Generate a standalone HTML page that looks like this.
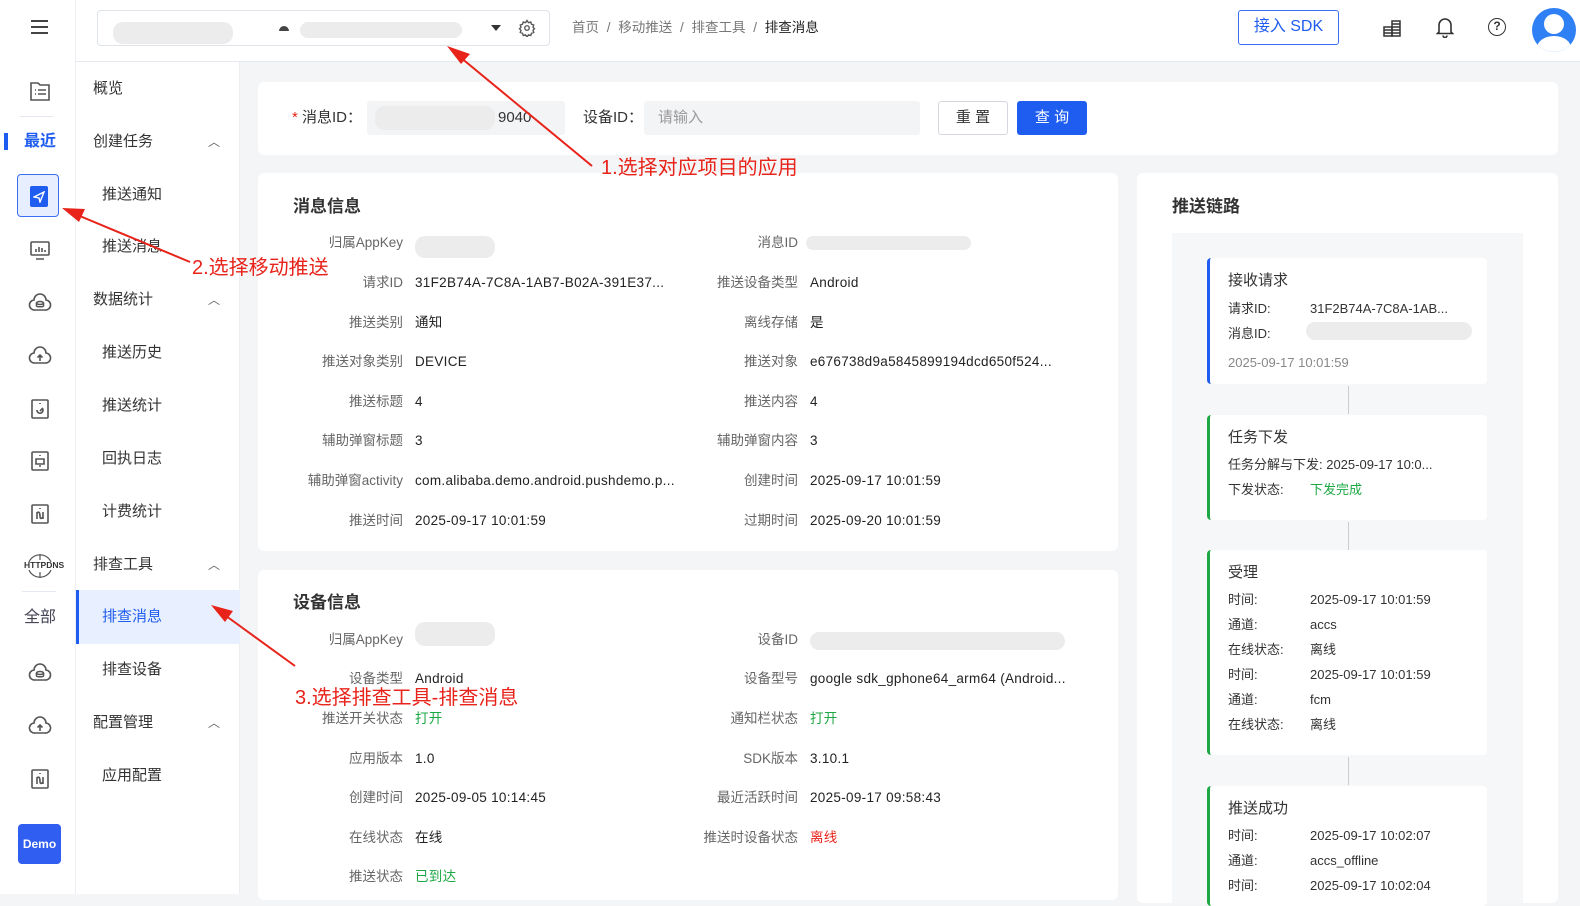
<!DOCTYPE html>
<html><head><meta charset="utf-8"><style>
*{margin:0;padding:0;box-sizing:border-box}
body{width:1580px;height:894px;overflow:hidden;background:#f4f5f7;font-family:"Liberation Sans","Noto Sans CJK SC",sans-serif;color:#333;position:relative}
.a{position:absolute}
.top{left:0;top:0;width:1580px;height:62px;background:#fff;border-bottom:1px solid #e4e8ef}
.rail{left:0;top:0;width:76px;height:894px;background:#fff;border-right:1px solid #eceef2}
.nav{left:76px;top:62px;width:164px;height:832px;background:#fff;border-right:1px solid #eceef2}
.nav div{position:absolute;font-size:15px;color:#333;line-height:20px}
.card{background:#fff;border-radius:6px}
.lbl{position:absolute;font-size:13.5px;color:#666;text-align:right;white-space:nowrap;line-height:18px}
.val{position:absolute;font-size:13.5px;color:#222;white-space:nowrap;letter-spacing:.3px;line-height:18px}
.ic{position:absolute;left:28px}
.blur{position:absolute;background:#ececec;border-radius:10px}
.step{position:absolute;left:1207px;width:280px;background:#fff;border-radius:4px;border-left:3px solid #1ea845}
.step .t{position:absolute;left:18px;top:12px;font-size:15px;color:#333;line-height:22px}
.step .r{position:absolute;left:18px;font-size:13px;color:#333;white-space:nowrap;line-height:18px}
.step .r span{position:absolute;left:82px;top:0}
.ann{position:absolute;color:#e8231a;font-size:20px;white-space:nowrap;line-height:24px}
</style></head><body>
<div class="a top"></div>
<div class="a rail"></div>
<!-- rail -->
<div class="a" style="left:31px;top:20px;width:17px;height:2px;background:#444;box-shadow:0 6px 0 #444,0 12px 0 #444"></div>
<svg class="ic" style="top:79px" width="24" height="24" viewBox="0 0 24 24" fill="none" stroke="#555" stroke-width="1.6"><path d="M3 4h7l2 2h9v15H3z"/><path d="M7 11h1M10 11h8M7 15h1M10 15h8"/></svg>
<div class="a" style="left:20px;top:116px;width:34px;height:1px;background:#e4e8ef"></div>
<div class="a" style="left:4px;top:133px;width:4px;height:17px;background:#1f5cf0"></div>
<div class="a" style="left:24px;top:132px;font-size:16px;color:#1f5cf0;font-weight:bold;line-height:20px">最近</div>
<div class="a" style="left:17px;top:174px;width:42px;height:43px;border:1.5px solid #3a6ff2;border-radius:4px;background:#e6eeff"></div>
<div class="a" style="left:30px;top:186px;width:18px;height:21px;background:#1f5cf0;border-radius:2px"></div>
<svg class="a" style="left:33px;top:191px" width="12" height="12" viewBox="0 0 12 12" fill="none" stroke="#fff" stroke-width="1.4"><path d="M1 6l10-5-4 10-1-4z"/></svg>
<svg class="ic" style="top:238px" width="24" height="24" viewBox="0 0 24 24" fill="none" stroke="#555" stroke-width="1.6"><rect x="3" y="4" width="18" height="13" rx="1"/><path d="M8 21h8M8 14v-3M11 14v-5M14 14v-4M17 14v-2"/></svg>
<svg class="ic" style="top:291px" width="24" height="24" viewBox="0 0 24 24" fill="none" stroke="#555" stroke-width="1.6"><path d="M7 19a5 5 0 0 1-1-10 6 6 0 0 1 12 0 5 5 0 0 1-1 10z"/><ellipse cx="12" cy="12" rx="3.5" ry="1.5"/><path d="M8.5 12v3c0 1 7 1 7 0v-3"/></svg>
<svg class="ic" style="top:344px" width="24" height="24" viewBox="0 0 24 24" fill="none" stroke="#555" stroke-width="1.6"><path d="M7 19a5 5 0 0 1-1-10 6 6 0 0 1 12 0 5 5 0 0 1-1 10z"/><path d="M12 17v-6M9.5 13.5L12 11l2.5 2.5"/></svg>
<svg class="ic" style="top:397px" width="24" height="24" viewBox="0 0 24 24" fill="none" stroke="#555" stroke-width="1.6"><rect x="4" y="3" width="16" height="18" rx="1"/><path d="M12 6v1M9 13a3 3 0 1 0 5-2M12 14l3-3"/></svg>
<svg class="ic" style="top:449px" width="24" height="24" viewBox="0 0 24 24" fill="none" stroke="#555" stroke-width="1.6"><rect x="4" y="3" width="16" height="18" rx="1"/><path d="M12 6v1M8 10h8v5H8zM11 17h2"/></svg>
<svg class="ic" style="top:502px" width="24" height="24" viewBox="0 0 24 24" fill="none" stroke="#555" stroke-width="1.6"><rect x="4" y="3" width="16" height="18" rx="1"/><path d="M12 6v1M9 10v7M9 11c2-2 3 0 3 3s1 3 3 1M15 10v7"/></svg>
<svg class="ic" style="top:553px;left:25px" width="30" height="26" viewBox="0 0 30 26" fill="none" stroke="#555" stroke-width="1.2"><path d="M4 9a12 12 0 0 1 22 0M4 17a12 12 0 0 0 22 0M15 1v6M15 19v6"/></svg>
<div class="a" style="left:24px;top:560px;font-size:8.5px;font-weight:bold;color:#333;line-height:10px">HTTPDNS</div>
<div class="a" style="left:22px;top:591px;width:34px;height:1px;background:#e4e8ef"></div>
<div class="a" style="left:24px;top:608px;font-size:16px;color:#445;line-height:20px">全部</div>
<svg class="ic" style="top:661px" width="24" height="24" viewBox="0 0 24 24" fill="none" stroke="#555" stroke-width="1.6"><path d="M7 19a5 5 0 0 1-1-10 6 6 0 0 1 12 0 5 5 0 0 1-1 10z"/><ellipse cx="12" cy="12" rx="3.5" ry="1.5"/><path d="M8.5 12v3c0 1 7 1 7 0v-3"/></svg>
<svg class="ic" style="top:714px" width="24" height="24" viewBox="0 0 24 24" fill="none" stroke="#555" stroke-width="1.6"><path d="M7 19a5 5 0 0 1-1-10 6 6 0 0 1 12 0 5 5 0 0 1-1 10z"/><path d="M12 17v-6M9.5 13.5L12 11l2.5 2.5"/></svg>
<svg class="ic" style="top:767px" width="24" height="24" viewBox="0 0 24 24" fill="none" stroke="#555" stroke-width="1.6"><rect x="4" y="3" width="16" height="18" rx="1"/><path d="M12 6v1M9 10v7M9 11c2-2 3 0 3 3s1 3 3 1M15 10v7"/></svg>
<div class="a" style="left:18px;top:824px;width:43px;height:40px;background:#2f5ef0;border-radius:4px;color:#fff;font-size:12px;font-weight:bold;text-align:center;line-height:40px">Demo</div>
<!-- top bar -->
<div class="a" style="left:97px;top:10px;width:453px;height:36px;border:1px solid #dfe3ea;border-radius:4px"></div>
<div class="blur" style="left:113px;top:22px;width:120px;height:22px"></div>
<div class="blur" style="left:300px;top:22px;width:162px;height:16px"></div>
<svg class="a" style="left:278px;top:22px" width="12" height="10" viewBox="0 0 12 10" fill="#444"><path d="M1 9a5 5 0 0 1 10 0z"/></svg>
<svg class="a" style="left:491px;top:25px" width="10" height="6" viewBox="0 0 10 6" fill="#333"><path d="M0 0h10L5 6z"/></svg>
<svg class="a" style="left:518px;top:19px" width="18" height="18" viewBox="0 0 24 24" fill="none" stroke="#555" stroke-width="1.8"><circle cx="12" cy="12" r="3"/><path d="M12 2l2 3 3-1 1 3 3 1-1 3 2 2-2 2 1 3-3 1-1 3-3-1-2 3-2-3-3 1-1-3-3-1 1-3-2-2 2-2-1-3 3-1 1-3 3 1z"/></svg>
<div class="a" style="left:572px;top:19px;font-size:13.5px;color:#777;word-spacing:4px;line-height:18px">首页 / 移动推送 / 排查工具 / <span style="color:#222">排查消息</span></div>
<div class="a" style="left:1238px;top:10px;width:101px;height:35px;border:1.5px solid #3a6ff2;border-radius:3px;color:#1f5cf0;font-size:16px;text-align:center;line-height:32px">接入 SDK</div>
<svg class="a" style="left:1382px;top:18px" width="20" height="20" viewBox="0 0 20 20" fill="none" stroke="#333" stroke-width="1.5"><rect x="2" y="9" width="8" height="9"/><path d="M2 12h8M2 15h8"/><rect x="10" y="3" width="8" height="15"/><path d="M10 6h8M10 9h8M10 12h8M10 15h8"/></svg>
<svg class="a" style="left:1435px;top:16px" width="20" height="22" viewBox="0 0 20 22" fill="none" stroke="#333" stroke-width="1.6"><path d="M4 16V9a6 6 0 0 1 12 0v7l1.5 1.5h-15zM8 19.5a2 2 0 0 0 4 0"/></svg>
<div class="a" style="left:1488px;top:18px;width:18px;height:18px;border:1.6px solid #333;border-radius:50%;font-size:12px;text-align:center;line-height:15px;font-weight:bold">?</div>
<div class="a" style="left:1532px;top:8px;width:44px;height:44px;border-radius:50%;background:#2f7ff5;overflow:hidden"><div class="a" style="left:12px;top:6px;width:20px;height:20px;border-radius:50%;background:#fff"></div><div class="a" style="left:5px;top:28px;width:34px;height:24px;border-radius:50%;background:#fff"></div></div>
<!-- nav -->
<div class="a nav">
<div style="left:17px;top:17px">概览</div>
<div style="left:17px;top:70px">创建任务</div><div style="left:132px;top:70px;color:#666;font-size:12px">︿</div>
<div style="left:26px;top:123px">推送通知</div>
<div style="left:26px;top:175px">推送消息</div>
<div style="left:17px;top:228px">数据统计</div><div style="left:132px;top:228px;color:#666;font-size:12px">︿</div>
<div style="left:26px;top:281px">推送历史</div>
<div style="left:26px;top:334px">推送统计</div>
<div style="left:26px;top:387px">回执日志</div>
<div style="left:26px;top:440px">计费统计</div>
<div style="left:17px;top:493px">排查工具</div><div style="left:132px;top:493px;color:#666;font-size:12px">︿</div>
<div style="left:0;top:528px;width:164px;height:54px;background:#e8efff;border-left:3px solid #1f5cf0"></div>
<div style="left:26px;top:545px;color:#1f5cf0">排查消息</div>
<div style="left:26px;top:598px">排查设备</div>
<div style="left:17px;top:651px">配置管理</div><div style="left:132px;top:651px;color:#666;font-size:12px">︿</div>
<div style="left:26px;top:704px">应用配置</div>
</div>
<!-- query card -->
<div class="a card" style="left:258px;top:82px;width:1300px;height:73px"></div>
<div class="a" style="left:292px;top:108px;font-size:15px;color:#333;line-height:20px"><span style="color:#e8231a">*</span> 消息ID：</div>
<div class="a" style="left:367px;top:101px;width:198px;height:34px;background:#f3f4f6;border-radius:3px"></div>
<div class="blur" style="left:375px;top:106px;width:120px;height:24px"></div>
<div class="a" style="left:498px;top:108px;font-size:15px;line-height:20px">9040</div>
<div class="a" style="left:583px;top:108px;font-size:15px;line-height:20px">设备ID：</div>
<div class="a" style="left:644px;top:101px;width:276px;height:34px;background:#f3f4f6;border-radius:3px;font-size:15px;color:#999;padding:0 14px;line-height:34px">请输入</div>
<div class="a" style="left:938px;top:101px;width:70px;height:34px;border:1px solid #d5d8de;border-radius:3px;font-size:15px;text-align:center;line-height:32px">重 置</div>
<div class="a" style="left:1017px;top:101px;width:70px;height:34px;background:#1f5cf0;border-radius:3px;font-size:15px;color:#fff;text-align:center;line-height:34px">查 询</div>
<!-- msg card -->
<div class="a card" style="left:258px;top:173px;width:860px;height:378px"></div>
<div class="a" style="left:293px;top:196px;font-size:17px;font-weight:bold;line-height:22px">消息信息</div>
<div class="lbl" style="right:1177px;top:234px">归属AppKey</div><div class="blur" style="left:415px;top:236px;width:80px;height:22px"></div>
<div class="lbl" style="right:782px;top:234px">消息ID</div><div class="blur" style="left:806px;top:236px;width:165px;height:14px"></div>
<div class="lbl" style="right:1177px;top:274px">请求ID</div><div class="val" style="left:415px;top:274px">31F2B74A-7C8A-1AB7-B02A-391E37...</div>
<div class="lbl" style="right:782px;top:274px">推送设备类型</div><div class="val" style="left:810px;top:274px">Android</div>
<div class="lbl" style="right:1177px;top:314px">推送类别</div><div class="val" style="left:415px;top:314px">通知</div>
<div class="lbl" style="right:782px;top:314px">离线存储</div><div class="val" style="left:810px;top:314px">是</div>
<div class="lbl" style="right:1177px;top:353px">推送对象类别</div><div class="val" style="left:415px;top:353px">DEVICE</div>
<div class="lbl" style="right:782px;top:353px">推送对象</div><div class="val" style="left:810px;top:353px">e676738d9a5845899194dcd650f524...</div>
<div class="lbl" style="right:1177px;top:393px">推送标题</div><div class="val" style="left:415px;top:393px">4</div>
<div class="lbl" style="right:782px;top:393px">推送内容</div><div class="val" style="left:810px;top:393px">4</div>
<div class="lbl" style="right:1177px;top:432px">辅助弹窗标题</div><div class="val" style="left:415px;top:432px">3</div>
<div class="lbl" style="right:782px;top:432px">辅助弹窗内容</div><div class="val" style="left:810px;top:432px">3</div>
<div class="lbl" style="right:1177px;top:472px">辅助弹窗activity</div><div class="val" style="left:415px;top:472px">com.alibaba.demo.android.pushdemo.p...</div>
<div class="lbl" style="right:782px;top:472px">创建时间</div><div class="val" style="left:810px;top:472px">2025-09-17 10:01:59</div>
<div class="lbl" style="right:1177px;top:512px">推送时间</div><div class="val" style="left:415px;top:512px">2025-09-17 10:01:59</div>
<div class="lbl" style="right:782px;top:512px">过期时间</div><div class="val" style="left:810px;top:512px">2025-09-20 10:01:59</div>
<!-- device card -->
<div class="a card" style="left:258px;top:570px;width:860px;height:330px"></div>
<div class="a" style="left:293px;top:592px;font-size:17px;font-weight:bold;line-height:22px">设备信息</div>
<div class="lbl" style="right:1177px;top:631px">归属AppKey</div><div class="blur" style="left:415px;top:622px;width:80px;height:24px"></div>
<div class="lbl" style="right:782px;top:631px">设备ID</div><div class="blur" style="left:810px;top:632px;width:255px;height:18px"></div>
<div class="lbl" style="right:1177px;top:670px">设备类型</div><div class="val" style="left:415px;top:670px">Android</div>
<div class="lbl" style="right:782px;top:670px">设备型号</div><div class="val" style="left:810px;top:670px">google sdk_gphone64_arm64 (Android...</div>
<div class="lbl" style="right:1177px;top:710px">推送开关状态</div><div class="val" style="left:415px;top:710px;color:#1ea845">打开</div>
<div class="lbl" style="right:782px;top:710px">通知栏状态</div><div class="val" style="left:810px;top:710px;color:#1ea845">打开</div>
<div class="lbl" style="right:1177px;top:750px">应用版本</div><div class="val" style="left:415px;top:750px">1.0</div>
<div class="lbl" style="right:782px;top:750px">SDK版本</div><div class="val" style="left:810px;top:750px">3.10.1</div>
<div class="lbl" style="right:1177px;top:789px">创建时间</div><div class="val" style="left:415px;top:789px">2025-09-05 10:14:45</div>
<div class="lbl" style="right:782px;top:789px">最近活跃时间</div><div class="val" style="left:810px;top:789px">2025-09-17 09:58:43</div>
<div class="lbl" style="right:1177px;top:829px">在线状态</div><div class="val" style="left:415px;top:829px">在线</div>
<div class="lbl" style="right:782px;top:829px">推送时设备状态</div><div class="val" style="left:810px;top:829px;color:#e8231a">离线</div>
<div class="lbl" style="right:1177px;top:868px">推送状态</div><div class="val" style="left:415px;top:868px;color:#1ea845">已到达</div>
<!-- chain -->
<div class="a card" style="left:1137px;top:173px;width:421px;height:730px"></div>
<div class="a" style="left:1172px;top:196px;font-size:17px;font-weight:bold;line-height:22px">推送链路</div>
<div class="a" style="left:1172px;top:233px;width:351px;height:670px;background:#f6f7f9"></div>
<div class="step" style="top:258px;height:126px;border-left-color:#1f5cf0">
<div class="t">接收请求</div>
<div class="r" style="top:42px">请求ID:<span>31F2B74A-7C8A-1AB...</span></div>
<div class="r" style="top:67px">消息ID:</div><div class="blur" style="left:96px;top:64px;width:166px;height:18px"></div>
<div class="r" style="top:96px;color:#888">2025-09-17 10:01:59</div></div>
<div class="a" style="left:1348px;top:386px;width:1px;height:28px;background:#ccc"></div>
<div class="step" style="top:415px;height:105px">
<div class="t">任务下发</div>
<div class="r" style="top:41px">任务分解与下发:&nbsp;2025-09-17 10:0...</div>
<div class="r" style="top:66px">下发状态:<span style="color:#1ea845">下发完成</span></div></div>
<div class="a" style="left:1348px;top:522px;width:1px;height:28px;background:#ccc"></div>
<div class="step" style="top:550px;height:205px">
<div class="t">受理</div>
<div class="r" style="top:41px">时间:<span>2025-09-17 10:01:59</span></div>
<div class="r" style="top:66px">通道:<span>accs</span></div>
<div class="r" style="top:91px">在线状态:<span>离线</span></div>
<div class="r" style="top:116px">时间:<span>2025-09-17 10:01:59</span></div>
<div class="r" style="top:141px">通道:<span>fcm</span></div>
<div class="r" style="top:166px">在线状态:<span>离线</span></div></div>
<div class="a" style="left:1348px;top:757px;width:1px;height:28px;background:#ccc"></div>
<div class="step" style="top:786px;height:120px">
<div class="t">推送成功</div>
<div class="r" style="top:41px">时间:<span>2025-09-17 10:02:07</span></div>
<div class="r" style="top:66px">通道:<span>accs_offline</span></div>
<div class="r" style="top:91px">时间:<span>2025-09-17 10:02:04</span></div></div>
<!-- annotations -->
<svg class="a" style="left:0;top:0" width="1580" height="894">
<g stroke="#e8231a" stroke-width="2" fill="#e8231a">
<line x1="592" y1="166" x2="460" y2="57"/><polygon points="447,46 470,54 461,64" stroke="none"/>
<line x1="190" y1="262" x2="75" y2="214"/><polygon points="62,208 85,209 79,222" stroke="none"/>
<line x1="295" y1="666" x2="222" y2="613"/><polygon points="211,605 233,611 225,622" stroke="none"/>
</g></svg>
<div class="ann" style="left:601px;top:156px">1.选择对应项目的应用</div>
<div class="ann" style="left:192px;top:256px">2.选择移动推送</div>
<div class="ann" style="left:295px;top:686px">3.选择排查工具-排查消息</div>
</body></html>
